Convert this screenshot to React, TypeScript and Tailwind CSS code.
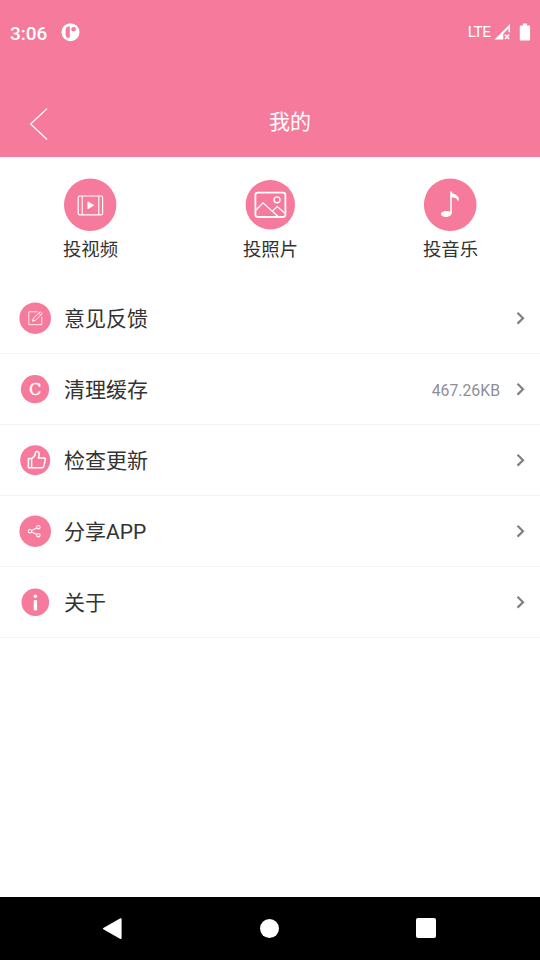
import React from 'react';

type Item = {
  label: string;
  icon: React.ReactNode;
  value?: string;
};

const PINK = '#f67a9b';

const VideoIcon = () => (
  <svg className="w-[54px] h-[54px]" viewBox="0 0 54 54" fill="none" stroke="white">
    <circle cx="27.2" cy="26.8" r="26.2" fill={PINK} stroke="none" />
    <rect x="15.2" y="18" width="24.4" height="18.8" rx="1.6" strokeWidth="1.2" />
    <path d="M19.2 18v18.8M35.8 18v18.8" strokeWidth="1.1" />
    <path d="M24.9 23.9l5.8 3.4-5.8 3.5z" fill="white" strokeWidth="0.8" strokeLinejoin="round" />
  </svg>
);

const PhotoIcon = () => (
  <svg className="w-[54px] h-[54px]" viewBox="0 0 54 54" fill="none" stroke="white">
    <circle cx="27.3" cy="26.8" r="24.7" fill={PINK} stroke="none" />
    <rect x="12.4" y="14.6" width="30" height="24.4" rx="2.4" strokeWidth="1.8" />
    <circle cx="34" cy="21.8" r="3" strokeWidth="1.3" />
    <path d="M12.8 32.2l7.2-7.4L35 38.6M29.6 33l4.6-4.4 8 7" strokeWidth="1.3" />
  </svg>
);

const MusicIcon = () => (
  <svg className="w-[54px] h-[54px]" viewBox="0 0 54 54">
    <circle cx="27.2" cy="26.7" r="26.3" fill={PINK} />
    <ellipse cx="23.2" cy="35.9" rx="5.3" ry="3" fill="white" transform="rotate(-4 23.2 35.9)" />
    <path
      d="M27.2 13.6h1.3c.7 2.8 7.3 3 7.3 7.2 0 1-.3 1.9-1 2.7.1-2.6-2.4-4-6-4.3V35.8h-1.6z"
      fill="white"
    />
  </svg>
);

const FeedbackIcon = () => (
  <svg className="w-9 h-9" viewBox="0 0 36 36" fill="none" stroke="white" strokeWidth="1">
    <circle cx="18.2" cy="18.2" r="15.8" fill={PINK} stroke="none" />
    <path d="M20.5 11.8h-8.7v12.9h13V16.5" strokeOpacity="0.85" />
    <path d="M15.6 21.2l.8-3 6.9-6.5 1.9 1.9-6.7 6.7zM21.8 13.2l1.9 1.9" strokeLinejoin="round" />
  </svg>
);

const CacheIcon = () => (
  <svg className="w-9 h-9" viewBox="0 0 36 36">
    <circle cx="18" cy="18.2" r="14.1" fill={PINK} />
    <text
      x="18.2"
      y="24"
      textAnchor="middle"
      fill="white"
      stroke="white"
      strokeWidth="0.4"
      className="font-['DejaVu_Serif',serif] text-[16px]"
    >
      C
    </text>
  </svg>
);

const UpdateIcon = () => (
  <svg className="w-9 h-9" viewBox="0 0 36 36" fill="none" stroke="white" strokeWidth="1.5" strokeLinejoin="round">
    <circle cx="18.2" cy="18.2" r="15" fill={PINK} stroke="none" />
    <path d="M11.4 16.5h3.2v9.2h-3.2zM14.6 16.5c2.7-1.5 3.600-3.400 3.900-5.700.2-2.200 3.700-1.800 3.700 1.300 0 1.200-.4 2.500-.8 3.900h5.700c1 0 1.400.7 1.200 1.600l-1.500 6.800c-.2.800-.8 1.300-1.600 1.300H14.600" />
  </svg>
);

const ShareIcon = () => (
  <svg className="w-9 h-9" viewBox="0 0 36 36" fill="none" stroke="white" strokeWidth="1.1">
    <circle cx="18.2" cy="18.2" r="15.8" fill={PINK} stroke="none" />
    <circle cx="13" cy="18.2" r="1.7" />
    <circle cx="21.4" cy="14.2" r="1.7" />
    <circle cx="21.4" cy="22.2" r="1.7" />
    <path d="M14.6 17.4l5.3-2.5M14.6 19l5.3 2.5" />
  </svg>
);

const AboutIcon = () => (
  <svg className="w-9 h-9" viewBox="0 0 36 36" fill="white">
    <circle cx="18.3" cy="18.2" r="13.8" fill={PINK} />
    <circle cx="18.4" cy="12.2" r="1.7" />
    <rect x="16.7" y="15.9" width="3.4" height="10.6" rx="1.2" />
  </svg>
);

const actions: Item[] = [
  { label: '投视频', icon: <VideoIcon /> },
  { label: '投照片', icon: <PhotoIcon /> },
  { label: '投音乐', icon: <MusicIcon /> },
];

const menu: Item[] = [
  { label: '意见反馈', icon: <FeedbackIcon /> },
  { label: '清理缓存', icon: <CacheIcon />, value: '467.26KB' },
  { label: '检查更新', icon: <UpdateIcon /> },
  { label: '分享APP', icon: <ShareIcon /> },
  { label: '关于', icon: <AboutIcon /> },
];

const StatusBar = () => (
  <div className="flex h-16 items-center justify-between pl-[10px] pr-[9.5px] text-white">
    <div className="flex items-center gap-[14px]">
      <span className="text-[19px] font-medium leading-6 pt-[3px]">3:06</span>
      <svg className="w-5 h-5" viewBox="0 0 20 20">
        <circle cx="9.5" cy="10.2" r="9" fill="white" />
        <path d="M7.8 4.6c-2 0-3.2 1.5-3.2 3.6v4c0 2.2.9 3.8 2.8 3.8 1 0 1.4-.8 1.4-2V4.6z" fill={PINK} />
        <circle cx="12.6" cy="7.3" r="2.3" fill={PINK} />
      </svg>
    </div>
    <div className="flex items-center">
      <span className="text-[15.5px] leading-6 tracking-[-0.5px]">LTE</span>
      <svg className="ml-[3px] w-[17px] h-[18px]" viewBox="0 0 17 18">
        <path d="M.5 16.5L16 1v8.2h-1.5V5.6L9.3 10.8v5.7z" fill="white" />
        <path d="M10.9 11.6l4.2 4.4M15.1 11.6L10.9 16" stroke="white" strokeWidth="1.6" />
      </svg>
      <svg className="ml-2 w-3 h-[18px]" viewBox="0 0 12 18" fill="white">
        <path d="M4 .5h4v2h2.2c.5 0 .9.4.9.9v13c0 .6-.4 1-.9 1H1.700c-.5 0-.9-.4-.9-1v-13c0-.5.4-.9.9-.9H4z" />
      </svg>
    </div>
  </div>
);

export default function App() {
  return (
    <div className="flex h-[960px] w-[540px] flex-col bg-white font-[Roboto,'Noto_Sans_CJK_SC',sans-serif] text-[#333333]">
      {/* Header */}
      <header className="h-[157px] bg-[#f67a9b]">
        <StatusBar />
        <div className="flex h-[93px] items-center pl-[29px] pt-[22px]">
          <svg className="w-5 h-[34px] mt-1" viewBox="0 0 20 34" fill="none" stroke="white" strokeWidth="1.3">
            <path d="M18 1.6L1.6 17.1 18 32.4" />
          </svg>
          <h1 className="ml-[220px] text-[21px] leading-8 text-white">我的</h1>
        </div>
      </header>

      {/* Quick actions */}
      <section className="grid h-[126px] grid-cols-3 pt-[21px]">
        {actions.map((item) => (
          <div key={item.label} className="flex flex-col items-center">
            {item.icon}
            <span className="mt-1 pl-px text-[18.4px] leading-7">{item.label}</span>
          </div>
        ))}
      </section>

      {/* Menu */}
      <ul className="flex-1">
        {menu.map((item) => (
          <li key={item.label} className="flex h-[71px] items-center border-b border-[#f3f3f3] pl-[17px] pr-[15px]">
            {item.icon}
            <span className="ml-[11px] flex-1 pt-[2px] text-[21px] leading-8">{item.label}</span>
            {item.value && <span className="mr-4 pt-[3px] text-[15.8px] text-[#8e8e99]">{item.value}</span>}
            <svg className="w-[9px] h-[14px]" viewBox="0 0 9 14" fill="none" stroke="#808080" strokeWidth="2.2">
              <path d="M1.5 1.8L7 7.2l-5.500 5.400" />
            </svg>
          </li>
        ))}
      </ul>

      {/* System navigation */}
      <nav className="flex h-[63px] items-center justify-between bg-black pl-[102px] pr-[104px]">
        <svg className="w-5 h-[22px]" viewBox="0 0 20 22">
          <path d="M18.8 1v19.2L1.7 10.6z" fill="white" stroke="white" strokeWidth="1.6" strokeLinejoin="round" />
        </svg>
        <div className="ml-px h-[19px] w-[19px] rounded-full bg-white" />
        <div className="mb-px h-5 w-5 rounded-[2px] bg-white" />
      </nav>
    </div>
  );
}
